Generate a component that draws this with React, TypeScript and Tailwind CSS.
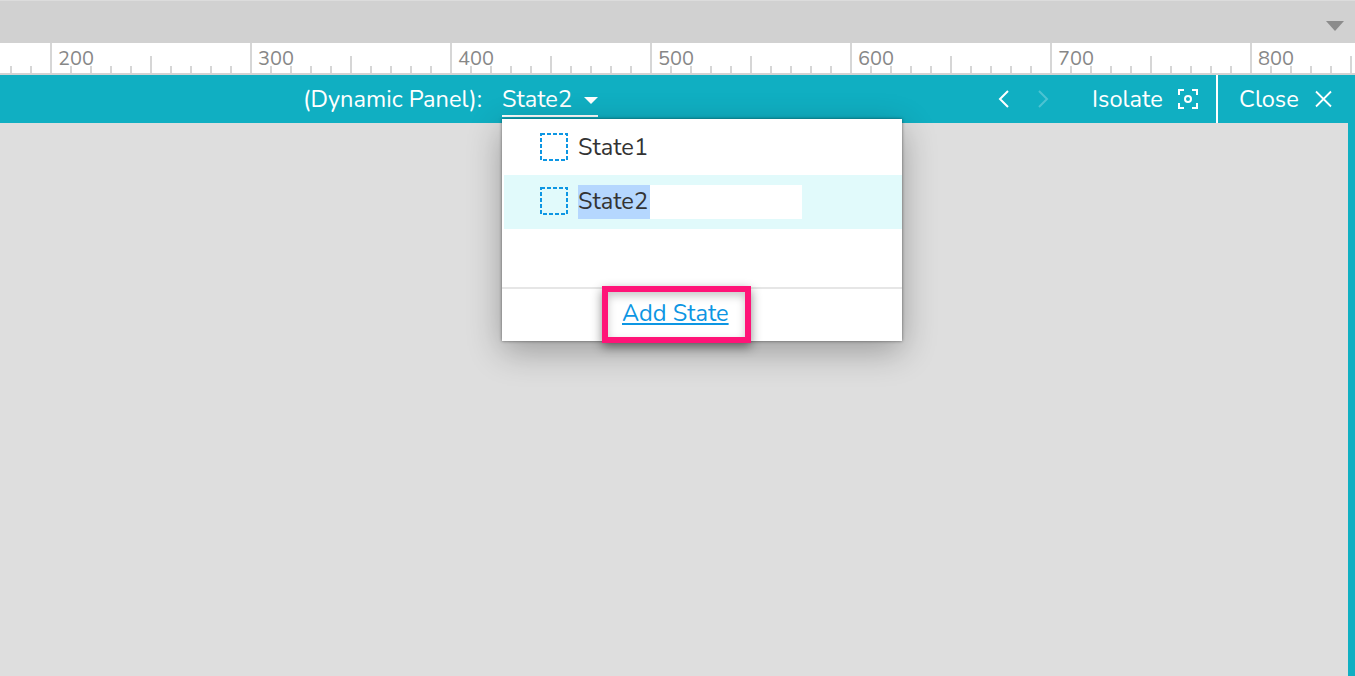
import React from 'react';

const RULER_LABELS = [200, 300, 400, 500, 600, 700, 800];

const Ruler: React.FC = () => {
  const ticks: number[] = [];
  for (let x = 10; x < 1355; x += 20) ticks.push(x);

  return (
    <div className="relative h-[32px] shrink-0 bg-white border-b-2 border-[#d2d2d2]">
      <svg className="absolute left-0 top-0" width="1355" height="30">
        {ticks.map((x) => {
          const isMajor = (x - 50) % 200 === 0;
          const isMid = (x - 150) % 200 === 0;
          const y1 = isMajor ? 0 : isMid ? 13 : 23;
          return <rect key={x} x={x} y={y1} width="2" height={30 - y1} fill="#d6d6d6" />;
        })}
      </svg>
      <div className="relative flex pl-[50px]">
        {RULER_LABELS.map((label) => (
          <div key={label} className="w-[200px] shrink-0 pl-[8px] pt-[4px] text-[20px] leading-[24px] text-[#878787]">
            {label}
          </div>
        ))}
      </div>
    </div>
  );
};

const DashedSquare: React.FC<{ className?: string }> = ({ className }) => (
  <svg width="28" height="28" viewBox="0 0 28 28" fill="none" className={className}>
    <rect x="1" y="1" width="26" height="26" stroke="#0d96e3" strokeWidth="2" strokeDasharray="4 2" />
  </svg>
);

const App: React.FC = () => {
  return (
    <div
      className="relative w-[1355px] h-[676px] overflow-hidden bg-[#dedede] flex flex-col"
      style={{ fontFamily: 'Nunito, "Nunito Sans", Lato, "Noto Sans", sans-serif' }}
    >
      <div className="h-[43px] shrink-0 bg-[#d1d1d1] border-t border-[#dcdcdc] flex justify-end items-end pr-[11px] pb-[12px]">
        <svg width="18" height="10" viewBox="0 0 18 10">
          <path d="M0 0H18L9 10Z" fill="#8c8c8c" />
        </svg>
      </div>
      <Ruler />

      <div className="h-[48px] bg-[#10afc2] flex items-center text-white text-[23.6px] leading-[28px] shrink-0">
        <div className="w-[303px] shrink-0" />
        <span className="w-[199px] shrink-0 whitespace-nowrap">(Dynamic Panel):</span>
        <div className="w-[96px] h-[42px] shrink-0 self-start pt-[8px] border-b-2 border-white flex items-center justify-between">
          <span>State2</span>
          <svg width="14" height="7" viewBox="0 0 14 7" className="mt-[2px]">
            <path d="M0 0H14L7 7Z" fill="#fff" />
          </svg>
        </div>
        <div className="w-[494px] shrink-0 flex justify-end gap-[26px] pr-[42px]">
          <svg width="14" height="20" viewBox="0 0 14 20" fill="none" stroke="#fff" strokeWidth="2">
            <path d="M12 2L4 10L12 18" />
          </svg>
          <svg width="14" height="20" viewBox="0 0 14 20" fill="none" stroke="#4cc3d2" strokeWidth="2">
            <path d="M3 2L11 10L3 18" />
          </svg>
        </div>
        <span className="w-[86px] shrink-0">Isolate</span>
        <svg width="20" height="20" viewBox="0 0 20 20" fill="none" stroke="#fff" strokeWidth="2" className="shrink-0">
          <path d="M1 6V1H6M14 1H19V6M19 14V19H14M6 19H1V14" />
          <circle cx="10" cy="10" r="3" />
        </svg>
        <div className="w-[2px] h-full shrink-0 bg-white ml-[18px] mr-[21px]" />
        <span className="w-[74px] shrink-0">Close</span>
        <svg width="20" height="20" viewBox="0 0 20 20" fill="none" stroke="#fff" strokeWidth="1.8" className="shrink-0">
          <path d="M3 2.5L18 17.5M18 2.5L3 17.5" />
        </svg>
      </div>

      <div className="flex-1 flex justify-end">
        <div className="w-[7px] bg-[#10afc2]" />
      </div>

      <div className="absolute left-[502px] top-[119px] w-[400px] h-[222px] bg-white shadow-[0_0_3px_rgba(0,0,0,0.5),0_10px_32px_rgba(0,0,0,0.3)] flex flex-col text-[23.6px] leading-[28px] text-[#333333]">
        <div className="h-[56px] pl-[38px] flex items-center gap-[10px]">
          <DashedSquare />
          <span>State1</span>
        </div>
        <div className="h-[54px] ml-[2px] pl-[36px] bg-[#e1fafb] flex items-center gap-[10px]">
          <DashedSquare className="mt-[-2px]" />
          <div className="w-[224px] h-[34px] bg-white flex items-center">
            <span className="bg-[#b5d7fe] h-[34px] w-[72px] pb-[2px] flex items-center">State2</span>
          </div>
        </div>
        <div className="h-[60px] border-b-2 border-[#e6e6e6]" />
        <div className="flex-1 pl-[120px] pt-[10px]">
          <span className="text-[#0d96e3] underline">Add State</span>
        </div>
      </div>

      <div className="absolute left-[602px] top-[286px] w-[149px] h-[57px] border-[6px] border-[#ff1478] shadow-[0_4px_10px_rgba(0,0,0,0.45),inset_0_4px_8px_rgba(0,0,0,0.22)]" />
    </div>
  );
};

export default App;
